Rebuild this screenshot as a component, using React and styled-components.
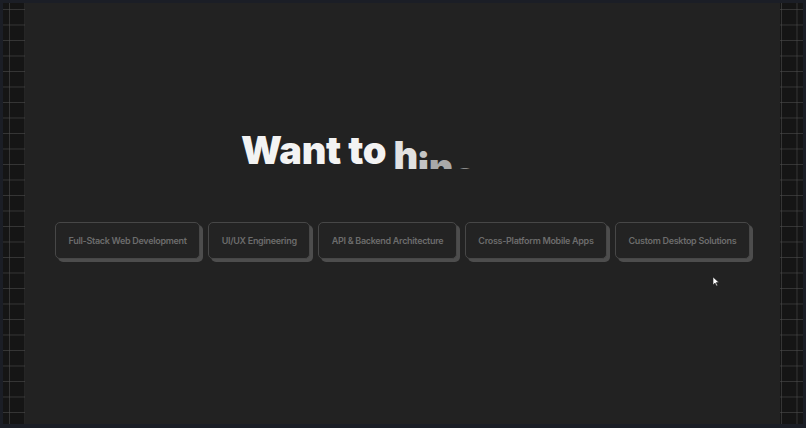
import React from 'react';
import styled, { createGlobalStyle } from 'styled-components';

const GlobalStyle = createGlobalStyle`
  html, body {
    margin: 0;
    padding: 0;
    background: #1b1e26;
  }
  * { box-sizing: border-box; }
`;

const Frame = styled.div`
  display: grid;
  grid-template-columns: 22px 1fr 23px;
  height: 428px;
  padding: 3px 3px 4px 3px;
  background: #1b1e26;
`;

const Rail = styled.div`
  background-color: #151515;
  background-image:
    linear-gradient(to bottom, rgba(80, 80, 80, 0.55) 1px, transparent 1px),
    linear-gradient(to right, rgba(80, 80, 80, 0.55) 1px, transparent 1px);
  background-size: 15.5px 15.5px;
  background-position: ${(p) => p.$offsetX}px 6px;
`;

const Panel = styled.main`
  position: relative;
  display: flex;
  flex-direction: column;
  align-items: center;
  padding-top: 127px;
  background: #222222;
  font-family: Inter, 'Noto Sans', sans-serif;
`;

const Heading = styled.h1`
  display: flex;
  margin: 0;
  height: 39px;
  overflow: hidden;
  font-size: 38px;
  line-height: 40px;
  font-weight: 900;
  letter-spacing: -0.3px;
  color: #f3f3f3;
  white-space: pre;
`;

const Letter = styled.span`
  display: inline-block;
  color: ${(p) => p.$color};
  transform: translateY(${(p) => p.$shift}px);
`;

const Services = styled.div`
  display: flex;
  gap: 8px;
  margin-top: 53px;
`;

const Service = styled.button`
  height: 37px;
  padding: 0 12.5px;
  border: 1px solid #474747;
  border-radius: 5px;
  background: #232323;
  box-shadow: 3px 3px 0 #4d4d4d;
  color: #6c6c6c;
  font-family: Inter, 'Noto Sans', sans-serif;
  font-size: 9px;
  font-weight: 600;
  letter-spacing: -0.3px;
  white-space: nowrap;
  cursor: pointer;
`;

const Pointer = styled.svg`
  position: absolute;
  left: 687px;
  top: 273px;
`;

const rolling = [
  { ch: 'h', shift: 5, color: '#e2e2e2' },
  { ch: 'i', shift: 17, color: '#c4c4c4' },
  { ch: 'n', shift: 17, color: '#a9a9a9' },
  { ch: 'e', shift: 25, color: '#8a8a8a' },
  { ch: ' ', shift: 40, color: '#777' },
  { ch: 'm', shift: 40, color: '#777' },
  { ch: 'e', shift: 40, color: '#777' },
  { ch: '?', shift: 40, color: '#777' },
];

const services = [
  'Full-Stack Web Development',
  'UI/UX Engineering',
  'API & Backend Architecture',
  'Cross-Platform Mobile Apps',
  'Custom Desktop Solutions',
];

export default function App() {
  return (
    <>
      <GlobalStyle />
      <Frame>
        <Rail $offsetX={6} />
        <Panel>
          <Heading>
            Want to{' '}
            {rolling.map((l, i) => (
              <Letter key={i} $shift={l.shift} $color={l.color}>
                {l.ch}
              </Letter>
            ))}
          </Heading>
          <Services>
            {services.map((s) => (
              <Service key={s}>{s}</Service>
            ))}
          </Services>
          <Pointer width="8" height="11" viewBox="0 0 8 11">
            <path d="M1 1 L1 9 L3 7 L4.5 10 L5.6 9.5 L4.2 6.6 L7 6.6 Z" fill="#fff" stroke="#222" strokeWidth="0.6" />
          </Pointer>
        </Panel>
        <Rail $offsetX={1} />
      </Frame>
    </>
  );
}
